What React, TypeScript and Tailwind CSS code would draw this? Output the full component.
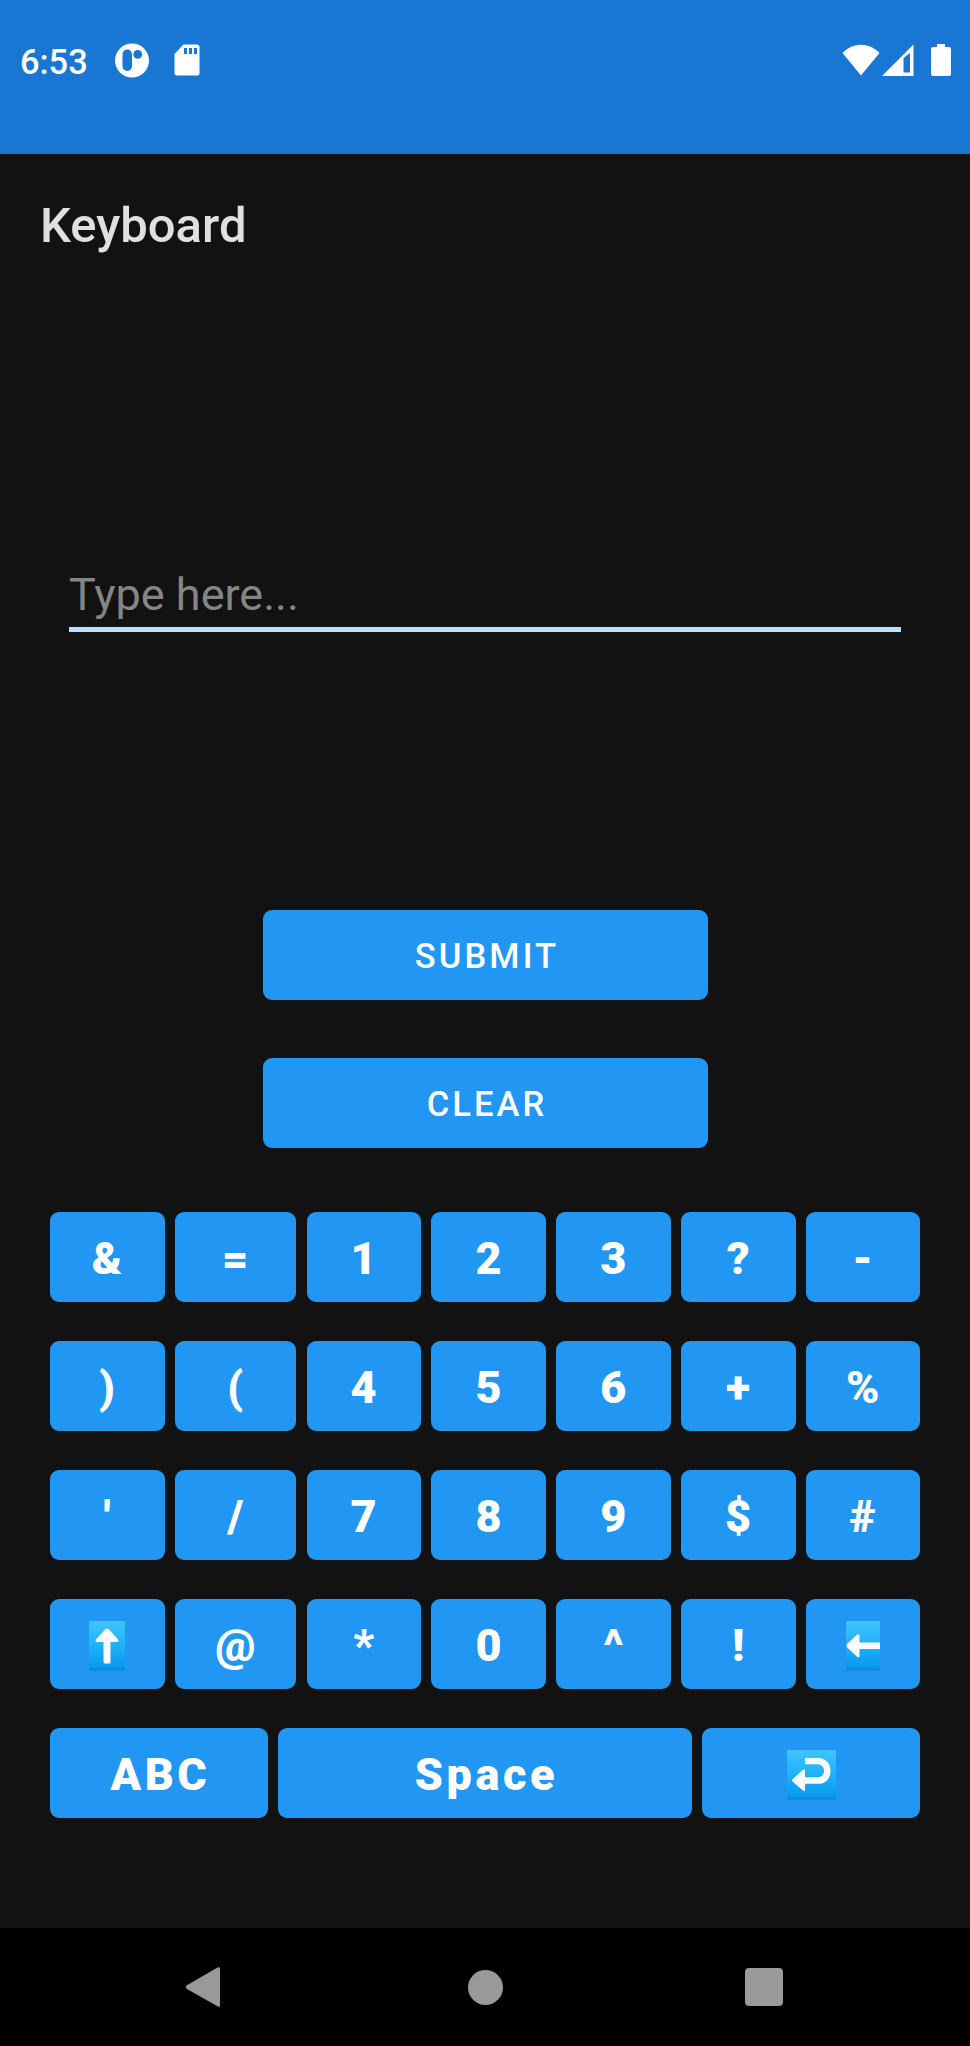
import type { ReactNode } from 'react';

const rows = [
  ['&', '=', '1', '2', '3', '?', '-'],
  [')', '(', '4', '5', '6', '+', '%'],
  ["'", '/', '7', '8', '9', '$', '#'],
  ['up', '@', '*', '0', '^', '!', 'left'],
];

function Tile({ kind }: { kind: 'up' | 'left' | 'return' }) {
  const w = kind === 'up' ? 36 : kind === 'left' ? 34 : 49;
  return (
    <svg width={w} height="50" viewBox={`0 0 ${w} 50`} className="block shrink-0">
      <defs>
        <linearGradient id={`tile-${kind}`} x1="0" y1="0" x2="0" y2="1">
          <stop offset="0" stopColor="#40c4ff" />
          <stop offset="0.5" stopColor="#1fb0f9" />
          <stop offset="0.93" stopColor="#0a99f0" />
          <stop offset="0.95" stopColor="#0a8ae0" />
          <stop offset="1" stopColor="#148de8" />
        </linearGradient>
      </defs>
      <rect width={w} height="50" rx="1" fill={`url(#tile-${kind})`} />
      {kind === 'up' && (
        <path d="M18 7.5Q19 7.5 20 8.5L29 18.5Q30 21 28 21H21.5V41Q21.5 42.5 20 42.5H16Q14.5 42.5 14.5 41V21H8Q6 21 7 18.5L16 8.5Q17 7.5 18 7.5Z" fill="#fafafa" />
      )}
      {kind === 'left' && (
        <path d="M0.5 24.5Q0.5 23.5 1.5 22.5L11 13.7Q13.5 12.5 13.5 15V21.5H34V28H13.5V35Q13.5 37 11 35.8L1.5 26.8Q0.5 25.5 0.5 24.5Z" fill="#fafafa" />
      )}
      {kind === 'return' && (
        <path d="M19 8H31.5C38.5 8 43.5 13.5 43.5 21C43.5 28.5 38.5 33.8 31.5 33.8H18V39.5Q18 42 16 40.5L5.5 31.5Q4.5 30.3 5.5 29.2L16 19.8Q18 18.5 18 21V27.2H31C34.5 27.2 37 24.7 37 21C37 17.3 34.5 14.3 31 14.3H19Q18 14.3 18 13V9Q18 8 19 8Z" fill="#fafafa" />
      )}
    </svg>
  );
}

function Key({ children }: { children: ReactNode }) {
  return (
    <button className="flex h-[90px] min-w-0 items-center justify-center rounded-[9px] bg-[#2196f3] pt-[4px] pl-[3px] text-[45px] leading-[54px] font-black tracking-[3.6px] text-white">
      {children}
    </button>
  );
}

function IconKey({ kind }: { kind: 'up' | 'left' | 'return' }) {
  return (
    <button className="flex h-[90px] min-w-0 items-center justify-center rounded-[9px] bg-[#2196f3] pt-[4px]">
      <Tile kind={kind} />
    </button>
  );
}

function ActionButton({ children }: { children: ReactNode }) {
  return (
    <button className="h-[90px] w-[445px] rounded-[9px] bg-[#2196f3] pt-[2px] pl-[4px] text-[34.5px] leading-[40px] font-medium tracking-[3.1px] text-white">
      {children}
    </button>
  );
}

export default function App() {
  return (
    <div className="flex h-[2046px] w-[970px] flex-col overflow-hidden bg-[#121212] font-['Roboto',sans-serif]">
      <header className="flex h-[154px] shrink-0 items-start bg-[#1976d2] pt-[42px] text-white">
        <div className="ml-[20px] w-[95px] text-[34.4px] leading-[41px] font-medium">6:53</div>
        <svg width="34" height="35" viewBox="0 0 34 35" className="mt-[1px]">
          <circle cx="17" cy="17.5" r="17" fill="#fff" />
          <rect x="7.5" y="6.5" width="9.5" height="21.5" rx="4.7" fill="#1976d2" />
          <circle cx="22.7" cy="11.3" r="4.4" fill="#1976d2" />
        </svg>
        <svg width="26" height="32" viewBox="0 0 26 32" className="mt-[2px] ml-[25px]">
          <path d="M9.5 0.5H23Q25.5 0.5 25.5 3V29Q25.5 31.5 23 31.5H3Q0.5 31.5 0.5 29V10Z" fill="#fff" />
          <path d="M10 4H13V10H10ZM15 4H18V10H15ZM20 4H23V10H20Z" fill="#1976d2" />
        </svg>
        <svg width="38" height="32" viewBox="0 0 38 32" className="mt-[2px] ml-[642px]">
          <path d="M0.5 9C11 -2 27 -2 37.5 9L19 31.5Z" fill="#fff" />
        </svg>
        <svg width="32" height="32" viewBox="0 0 32 32" className="mt-[2px] ml-[2px]">
          <path fillRule="evenodd" d="M0 32L31.5 0.5V32ZM21.5 14V28.5H28V9Z" fill="#fff" />
        </svg>
        <svg width="20" height="33" viewBox="0 0 20 33" className="mt-[1px] ml-[17px]">
          <path d="M6 1H14V4H18Q20 4 20 6V31Q20 33 18 33H2Q0 33 0 31V6Q0 4 2 4H6Z" fill="#fff" />
        </svg>
      </header>

      <main className="flex h-[1774px] shrink-0 flex-col">
        <h1 className="mt-[42px] ml-[40px] h-[60px] text-[49px] leading-[60px] font-medium text-[#e0e0e0]">Keyboard</h1>
        <div className="mt-[311px] ml-[69px] flex h-[65px] w-[832px] items-start border-b-[5px] border-[#bbdefb]">
          <input
            className="h-[56px] w-full bg-transparent text-[45px] leading-[56px] text-white outline-none placeholder:text-[#858585] placeholder:opacity-100"
            placeholder="Type here..."
          />
        </div>
        <div className="mt-[278px] flex flex-col items-center gap-[58px]">
          <ActionButton>SUBMIT</ActionButton>
          <ActionButton>CLEAR</ActionButton>
        </div>
        <div className="mt-[63.6px] ml-[50px] flex w-[870px] flex-col gap-[39px]">
          {rows.map((row) => (
            <div key={row[0]} className="grid grid-cols-[114.5fr_121.5fr_114.5fr_114.5fr_114.5fr_114.5fr_114fr] gap-[10.3px]">
              {row.map((k) =>
                k === 'up' || k === 'left' ? <IconKey key={k} kind={k} /> : <Key key={k}>{k}</Key>,
              )}
            </div>
          ))}
          <div className="grid grid-cols-[218fr_413.5fr_218fr] gap-[10.3px]">
            <Key>ABC</Key>
            <Key>Space</Key>
            <IconKey kind="return" />
          </div>
        </div>
      </main>

      <nav className="flex h-[118px] shrink-0 items-center bg-black">
        <svg width="36" height="42" viewBox="0 0 36 42" className="ml-[185px]">
          <path d="M32.5 1.5Q35 0.3 35 3V39Q35 42 32.5 40.3L1.5 22.8Q0 21 1.5 19.5Z" fill="#999" />
        </svg>
        <div className="ml-[247px] size-[35px] rounded-full bg-[#999]" />
        <div className="ml-[242px] size-[38px] rounded-[4px] bg-[#999]" />
      </nav>
    </div>
  );
}
